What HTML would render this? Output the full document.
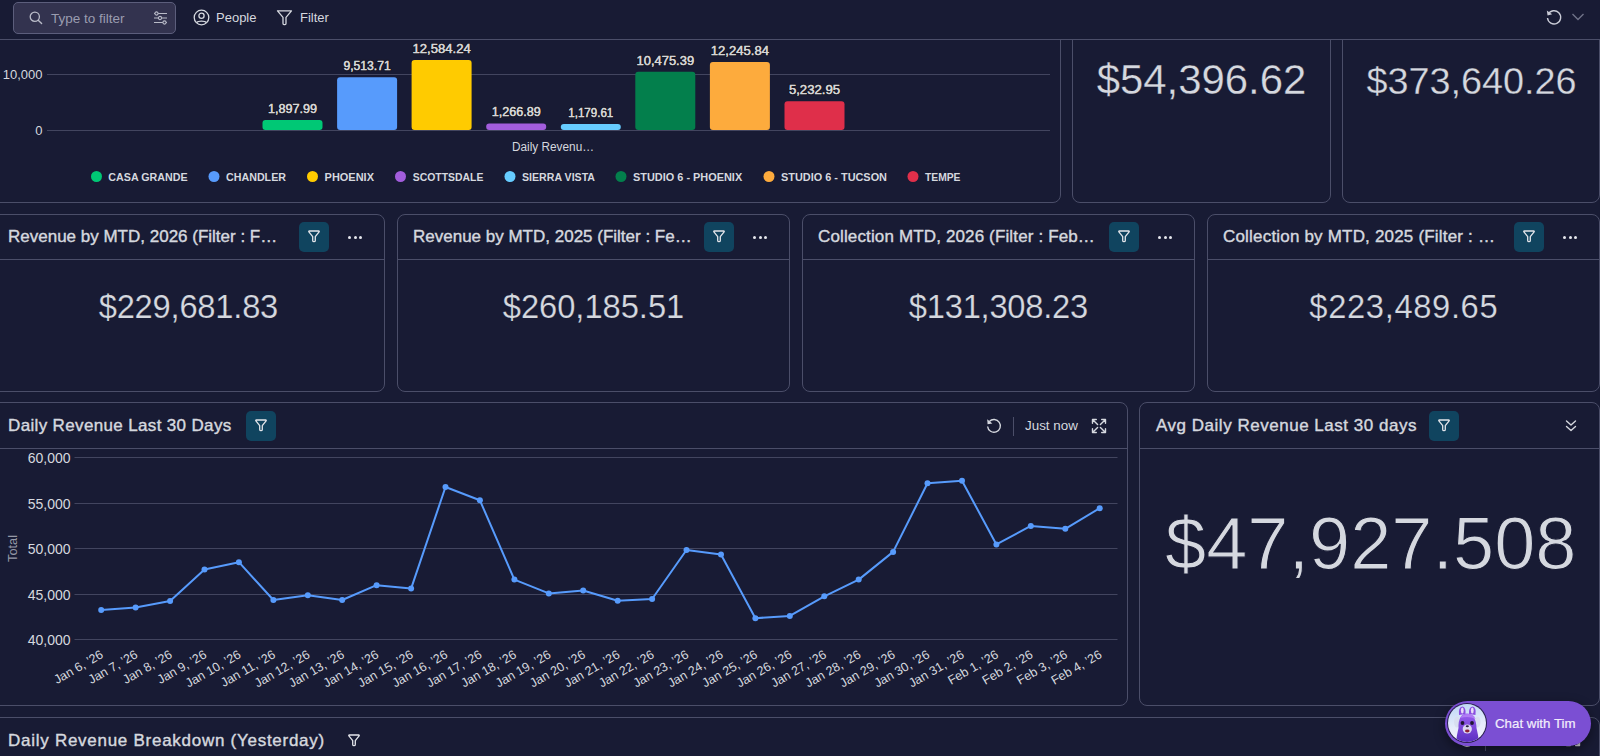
<!DOCTYPE html>
<html><head><meta charset="utf-8">
<style>
*{box-sizing:border-box;margin:0;padding:0}
html,body{width:1600px;height:756px;overflow:hidden;background:#181b34;font-family:"Liberation Sans",sans-serif;color:#d5d8df}
.abs{position:absolute}
.card{position:absolute;border:1px solid #4b4e69;border-radius:8px;background:#181b34}
.hdr{position:absolute;left:0;right:0;top:0;height:46px;border-bottom:1px solid #4b4e69}
.title{position:absolute;white-space:nowrap;font-size:17px;letter-spacing:0.15px;color:#d5d8df;line-height:20px;-webkit-text-stroke:0.4px #d5d8df}
.fbtn{position:absolute;width:29.5px;height:29.5px;border-radius:5px;background:#10445f}
.fbtn svg{position:absolute;left:7.6px;top:7px}
.dots{position:absolute;width:20px;height:6px}
.dots i{position:absolute;top:1.5px;width:3.2px;height:3.2px;border-radius:50%;background:#e6e8ee}
.val{position:absolute;white-space:nowrap;color:#d5d8df;text-align:center}
#toolbar{position:absolute;left:0;top:0;width:1600px;height:40px;background:#181b34;border-bottom:1px solid #4b4e69;z-index:10}
</style></head><body>

<!-- Row 1 -->
<div class="card" style="left:-8px;top:-40px;width:1069px;height:243px"></div>
<div class="card" style="left:1072px;top:-40px;width:259px;height:243px"></div>
<div class="card" style="left:1342px;top:-40px;width:258px;height:243px"></div>

<svg class="abs" style="left:0;top:0" width="1600" height="756" viewBox="0 0 1600 756">
<g stroke="#42455f" stroke-width="1"><path d="M47 74.5H1050"/></g>
<g font-family="Liberation Sans" font-size="13" fill="#d5d8df" text-anchor="end"><text x="42.5" y="79">10,000</text><text x="42.5" y="135">0</text></g>
<rect x="262.5" y="119.9" width="60" height="10.1" rx="3" fill="#00c875"/>
<text x="292.5" y="112.9" font-family="Liberation Sans" font-size="12.8" fill="#d6d6d6" stroke="#1a1a2a" stroke-width="2.8" paint-order="stroke" stroke-linejoin="round" text-anchor="middle" textLength="49.1" lengthAdjust="spacingAndGlyphs">1,897.99</text><text x="292.5" y="112.9" font-family="Liberation Sans" font-size="12.8" fill="#d6d6d6" stroke="#d6d6d6" stroke-width="0.3" text-anchor="middle" textLength="49.1" lengthAdjust="spacingAndGlyphs">1,897.99</text>
<rect x="337.1" y="77.2" width="60" height="52.8" rx="3" fill="#579bfc"/>
<text x="367.1" y="70.2" font-family="Liberation Sans" font-size="12.8" fill="#d6d6d6" stroke="#1a1a2a" stroke-width="2.8" paint-order="stroke" stroke-linejoin="round" text-anchor="middle" textLength="47.3" lengthAdjust="spacingAndGlyphs">9,513.71</text><text x="367.1" y="70.2" font-family="Liberation Sans" font-size="12.8" fill="#d6d6d6" stroke="#d6d6d6" stroke-width="0.3" text-anchor="middle" textLength="47.3" lengthAdjust="spacingAndGlyphs">9,513.71</text>
<rect x="411.6" y="60.0" width="60" height="70.0" rx="3" fill="#ffcb00"/>
<text x="441.6" y="53.0" font-family="Liberation Sans" font-size="12.8" fill="#d6d6d6" stroke="#1a1a2a" stroke-width="2.8" paint-order="stroke" stroke-linejoin="round" text-anchor="middle" textLength="58.2" lengthAdjust="spacingAndGlyphs">12,584.24</text><text x="441.6" y="53.0" font-family="Liberation Sans" font-size="12.8" fill="#d6d6d6" stroke="#d6d6d6" stroke-width="0.3" text-anchor="middle" textLength="58.2" lengthAdjust="spacingAndGlyphs">12,584.24</text>
<rect x="486.2" y="123.4" width="60" height="6.6" rx="3" fill="#a25ddc"/>
<text x="516.2" y="116.4" font-family="Liberation Sans" font-size="12.8" fill="#d6d6d6" stroke="#1a1a2a" stroke-width="2.8" paint-order="stroke" stroke-linejoin="round" text-anchor="middle" textLength="49.1" lengthAdjust="spacingAndGlyphs">1,266.89</text><text x="516.2" y="116.4" font-family="Liberation Sans" font-size="12.8" fill="#d6d6d6" stroke="#d6d6d6" stroke-width="0.3" text-anchor="middle" textLength="49.1" lengthAdjust="spacingAndGlyphs">1,266.89</text>
<rect x="560.8" y="123.9" width="60" height="6.1" rx="3" fill="#66ccff"/>
<text x="590.8" y="116.9" font-family="Liberation Sans" font-size="12.8" fill="#d6d6d6" stroke="#1a1a2a" stroke-width="2.8" paint-order="stroke" stroke-linejoin="round" text-anchor="middle" textLength="45" lengthAdjust="spacingAndGlyphs">1,179.61</text><text x="590.8" y="116.9" font-family="Liberation Sans" font-size="12.8" fill="#d6d6d6" stroke="#d6d6d6" stroke-width="0.3" text-anchor="middle" textLength="45" lengthAdjust="spacingAndGlyphs">1,179.61</text>
<rect x="635.3" y="71.8" width="60" height="58.2" rx="3" fill="#037f4c"/>
<text x="665.3" y="64.8" font-family="Liberation Sans" font-size="12.8" fill="#d6d6d6" stroke="#1a1a2a" stroke-width="2.8" paint-order="stroke" stroke-linejoin="round" text-anchor="middle" textLength="57.6" lengthAdjust="spacingAndGlyphs">10,475.39</text><text x="665.3" y="64.8" font-family="Liberation Sans" font-size="12.8" fill="#d6d6d6" stroke="#d6d6d6" stroke-width="0.3" text-anchor="middle" textLength="57.6" lengthAdjust="spacingAndGlyphs">10,475.39</text>
<rect x="709.9" y="61.9" width="60" height="68.1" rx="3" fill="#fdab3d"/>
<text x="739.9" y="54.9" font-family="Liberation Sans" font-size="12.8" fill="#d6d6d6" stroke="#1a1a2a" stroke-width="2.8" paint-order="stroke" stroke-linejoin="round" text-anchor="middle" textLength="58.2" lengthAdjust="spacingAndGlyphs">12,245.84</text><text x="739.9" y="54.9" font-family="Liberation Sans" font-size="12.8" fill="#d6d6d6" stroke="#d6d6d6" stroke-width="0.3" text-anchor="middle" textLength="58.2" lengthAdjust="spacingAndGlyphs">12,245.84</text>
<rect x="784.5" y="101.2" width="60" height="28.8" rx="3" fill="#df2f4a"/>
<text x="814.5" y="94.2" font-family="Liberation Sans" font-size="12.8" fill="#d6d6d6" stroke="#1a1a2a" stroke-width="2.8" paint-order="stroke" stroke-linejoin="round" text-anchor="middle" textLength="51.25" lengthAdjust="spacingAndGlyphs">5,232.95</text><text x="814.5" y="94.2" font-family="Liberation Sans" font-size="12.8" fill="#d6d6d6" stroke="#d6d6d6" stroke-width="0.3" text-anchor="middle" textLength="51.25" lengthAdjust="spacingAndGlyphs">5,232.95</text>
<g stroke="#42455f" stroke-width="1"><path d="M47 130.5H1050"/></g>
<text x="553" y="151" font-family="Liberation Sans" font-size="12.5" textLength="82" lengthAdjust="spacingAndGlyphs" fill="#d5d8df" text-anchor="middle">Daily Revenu…</text>
<circle cx="96.5" cy="176.5" r="5.5" fill="#00c875"/><text x="108.3" y="180.5" font-family="Liberation Sans" font-size="10.9" font-weight="bold" fill="#d5d8df" textLength="79.3" lengthAdjust="spacingAndGlyphs">CASA GRANDE</text>
<circle cx="214" cy="176.5" r="5.5" fill="#579bfc"/><text x="226" y="180.5" font-family="Liberation Sans" font-size="10.9" font-weight="bold" fill="#d5d8df" textLength="60" lengthAdjust="spacingAndGlyphs">CHANDLER</text>
<circle cx="312.5" cy="176.5" r="5.5" fill="#ffcb00"/><text x="324.6" y="180.5" font-family="Liberation Sans" font-size="10.9" font-weight="bold" fill="#d5d8df" textLength="49.4" lengthAdjust="spacingAndGlyphs">PHOENIX</text>
<circle cx="400.5" cy="176.5" r="5.5" fill="#a25ddc"/><text x="412.8" y="180.5" font-family="Liberation Sans" font-size="10.9" font-weight="bold" fill="#d5d8df" textLength="70.6" lengthAdjust="spacingAndGlyphs">SCOTTSDALE</text>
<circle cx="510" cy="176.5" r="5.5" fill="#66ccff"/><text x="522" y="180.5" font-family="Liberation Sans" font-size="10.9" font-weight="bold" fill="#d5d8df" textLength="73" lengthAdjust="spacingAndGlyphs">SIERRA VISTA</text>
<circle cx="621" cy="176.5" r="5.5" fill="#037f4c"/><text x="633" y="180.5" font-family="Liberation Sans" font-size="10.9" font-weight="bold" fill="#d5d8df" textLength="109.2" lengthAdjust="spacingAndGlyphs">STUDIO 6 - PHOENIX</text>
<circle cx="769" cy="176.5" r="5.5" fill="#fdab3d"/><text x="781" y="180.5" font-family="Liberation Sans" font-size="10.9" font-weight="bold" fill="#d5d8df" textLength="106" lengthAdjust="spacingAndGlyphs">STUDIO 6 - TUCSON</text>
<circle cx="913" cy="176.5" r="5.5" fill="#df2f4a"/><text x="925" y="180.5" font-family="Liberation Sans" font-size="10.9" font-weight="bold" fill="#d5d8df" textLength="35.5" lengthAdjust="spacingAndGlyphs">TEMPE</text>
</svg>
<div class="val" style="left:1072px;top:52px;width:259px;font-size:41.9px;line-height:56px;-webkit-text-stroke:0.3px #181b34">$54,396.62</div>
<div class="val" style="left:1342px;top:53px;width:259px;font-size:37.8px;line-height:56px;-webkit-text-stroke:0.3px #181b34">$373,640.26</div>
<!-- Row 2 -->
<div class="card" style="left:-8px;top:214px;width:393px;height:178px"><div class="hdr" style="height:45px"></div>
 <div class="title" style="left:15px;top:12px;letter-spacing:0px">Revenue by MTD, 2026 (Filter : F…</div>
 <div class="fbtn" style="left:306px;top:7px"><svg width="14" height="14" viewBox="0 0 14 14"><path d="M2.3 2 H11.7 Q12.6 2 12.1 2.8 L8.3 7.6 V11.4 Q8.3 12.6 7 12.6 Q5.7 12.6 5.7 11.4 V7.6 L1.9 2.8 Q1.4 2 2.3 2 Z" fill="none" stroke="#e3e5ea" stroke-width="1.3" stroke-linejoin="round"/></svg></div>
 <div class="dots" style="left:355px;top:19px"><i style="left:0"></i><i style="left:5.5px"></i><i style="left:11px"></i></div>
 <div class="val" style="left:0;top:76px;width:391px;font-size:32.7px;line-height:32px;-webkit-text-stroke:0.22px #181b34;letter-spacing:-0.22px;text-indent:-0.22px">$229,681.83</div>
</div>
<div class="card" style="left:397px;top:214px;width:393px;height:178px"><div class="hdr" style="height:45px"></div>
 <div class="title" style="left:15px;top:12px;letter-spacing:0px">Revenue by MTD, 2025 (Filter : Fe…</div>
 <div class="fbtn" style="left:306px;top:7px"><svg width="14" height="14" viewBox="0 0 14 14"><path d="M2.3 2 H11.7 Q12.6 2 12.1 2.8 L8.3 7.6 V11.4 Q8.3 12.6 7 12.6 Q5.7 12.6 5.7 11.4 V7.6 L1.9 2.8 Q1.4 2 2.3 2 Z" fill="none" stroke="#e3e5ea" stroke-width="1.3" stroke-linejoin="round"/></svg></div>
 <div class="dots" style="left:355px;top:19px"><i style="left:0"></i><i style="left:5.5px"></i><i style="left:11px"></i></div>
 <div class="val" style="left:0;top:76px;width:391px;font-size:32.7px;line-height:32px;-webkit-text-stroke:0.22px #181b34;letter-spacing:-0.03px;text-indent:-0.03px">$260,185.51</div>
</div>
<div class="card" style="left:802px;top:214px;width:393px;height:178px"><div class="hdr" style="height:45px"></div>
 <div class="title" style="left:15px;top:12px;letter-spacing:0.14px">Collection MTD, 2026 (Filter : Feb…</div>
 <div class="fbtn" style="left:306px;top:7px"><svg width="14" height="14" viewBox="0 0 14 14"><path d="M2.3 2 H11.7 Q12.6 2 12.1 2.8 L8.3 7.6 V11.4 Q8.3 12.6 7 12.6 Q5.7 12.6 5.7 11.4 V7.6 L1.9 2.8 Q1.4 2 2.3 2 Z" fill="none" stroke="#e3e5ea" stroke-width="1.3" stroke-linejoin="round"/></svg></div>
 <div class="dots" style="left:355px;top:19px"><i style="left:0"></i><i style="left:5.5px"></i><i style="left:11px"></i></div>
 <div class="val" style="left:0;top:76px;width:391px;font-size:32.7px;line-height:32px;-webkit-text-stroke:0.22px #181b34;letter-spacing:-0.25px;text-indent:-0.25px">$131,308.23</div>
</div>
<div class="card" style="left:1207px;top:214px;width:393px;height:178px"><div class="hdr" style="height:45px"></div>
 <div class="title" style="left:15px;top:12px;letter-spacing:0.19px">Collection by MTD, 2025 (Filter : …</div>
 <div class="fbtn" style="left:306px;top:7px"><svg width="14" height="14" viewBox="0 0 14 14"><path d="M2.3 2 H11.7 Q12.6 2 12.1 2.8 L8.3 7.6 V11.4 Q8.3 12.6 7 12.6 Q5.7 12.6 5.7 11.4 V7.6 L1.9 2.8 Q1.4 2 2.3 2 Z" fill="none" stroke="#e3e5ea" stroke-width="1.3" stroke-linejoin="round"/></svg></div>
 <div class="dots" style="left:355px;top:19px"><i style="left:0"></i><i style="left:5.5px"></i><i style="left:11px"></i></div>
 <div class="val" style="left:0;top:76px;width:391px;font-size:32.7px;line-height:32px;-webkit-text-stroke:0.22px #181b34;letter-spacing:0.65px;text-indent:0.65px">$223,489.65</div>
</div>

<!-- Row 3 -->
<div class="card" style="left:-8px;top:402px;width:1136px;height:304px"><div class="hdr"></div>
 <div class="title" style="left:15px;top:13px;letter-spacing:0.35px">Daily Revenue Last 30 Days</div>
 <div class="fbtn" style="left:253px;top:8px"><svg width="14" height="14" viewBox="0 0 14 14"><path d="M2.3 2 H11.7 Q12.6 2 12.1 2.8 L8.3 7.6 V11.4 Q8.3 12.6 7 12.6 Q5.7 12.6 5.7 11.4 V7.6 L1.9 2.8 Q1.4 2 2.3 2 Z" fill="none" stroke="#e3e5ea" stroke-width="1.3" stroke-linejoin="round"/></svg></div>
 <svg class="abs" style="left:992px;top:14px" width="18" height="18" viewBox="0 0 18 18"><path d="M4.2 4.6 A6.4 6.4 0 1 1 2.6 9.5" fill="none" stroke="#d5d8df" stroke-width="1.4"/><path d="M2.2 2.2 L2.6 7.2 L7.4 6.4 Z" fill="#d5d8df"/></svg>
 <div class="abs" style="left:1020px;top:14px;width:1px;height:19px;background:#4b4e69"></div>
 <div class="abs" style="left:1032px;top:15px;font-size:13.4px;line-height:16px;color:#d5d8df;white-space:nowrap">Just now</div>
 <svg class="abs" style="left:1098px;top:14.5px" width="16" height="16" viewBox="0 0 16 16"><g fill="none" stroke="#d5d8df" stroke-width="1.4" stroke-linecap="round" stroke-linejoin="round"><path d="M1.5 1.5 L6.6 6.6M1.5 5.3V1.5H5.3"/><path d="M14.5 1.5 L9.4 6.6M14.5 5.3V1.5H10.7"/><path d="M1.5 14.5 L6.6 9.4M1.5 10.7V14.5H5.3"/><path d="M14.5 14.5 L9.4 9.4M14.5 10.7V14.5H10.7"/></g></svg>
</div>
<div class="card" style="left:1139px;top:402px;width:461px;height:304px"><div class="hdr"></div>
 <div class="title" style="left:16px;top:13px;letter-spacing:0.52px">Avg Daily Revenue Last 30 days</div>
 <div class="fbtn" style="left:289px;top:8px"><svg width="14" height="14" viewBox="0 0 14 14"><path d="M2.3 2 H11.7 Q12.6 2 12.1 2.8 L8.3 7.6 V11.4 Q8.3 12.6 7 12.6 Q5.7 12.6 5.7 11.4 V7.6 L1.9 2.8 Q1.4 2 2.3 2 Z" fill="none" stroke="#e3e5ea" stroke-width="1.3" stroke-linejoin="round"/></svg></div>
 <svg class="abs" style="left:424px;top:15px" width="14" height="16" viewBox="0 0 14 16"><g fill="none" stroke="#d5d8df" stroke-width="1.4" stroke-linecap="round" stroke-linejoin="round"><path d="M2.5 3 L7 7 L11.5 3"/><path d="M2.5 8.5 L7 12.5 L11.5 8.5"/></g></svg>
 <div class="val" style="left:25px;top:101px;font-size:74px;line-height:80px;-webkit-text-stroke:1.1px #181b34">$47,927.508</div>
</div>
<svg class="abs" style="left:0;top:0" width="1600" height="756" viewBox="0 0 1600 756">
<g stroke="#42455f" stroke-width="1"><path d="M74.5 457.5H1117.5"/><path d="M74.5 503.5H1117.5"/><path d="M74.5 548.5H1117.5"/><path d="M74.5 594.5H1117.5"/><path d="M74.5 639.5H1117.5"/></g>
<g font-family="Liberation Sans" font-size="14" fill="#d5d8df" text-anchor="end"><text x="70.5" y="462.8">60,000</text><text x="70.5" y="508.8">55,000</text><text x="70.5" y="553.8">50,000</text><text x="70.5" y="599.8">45,000</text><text x="70.5" y="644.8">40,000</text></g>
<text transform="translate(16.8 548.5) rotate(-90)" font-family="Liberation Sans" font-size="12.8" fill="#9699a6" text-anchor="middle">Total</text>
<path d="M101.2 610.0 L135.6 607.4 L170.1 601.0 L204.5 569.6 L238.9 562.2 L273.4 600.0 L307.8 595.2 L342.2 600.0 L376.6 585.2 L411.1 588.6 L445.5 487.0 L479.9 500.3 L514.4 579.6 L548.8 593.4 L583.2 590.5 L617.7 600.8 L652.1 599.0 L686.5 550.0 L721.0 554.5 L755.4 618.2 L789.8 615.9 L824.3 596.3 L858.7 579.6 L893.1 551.9 L927.5 483.3 L962.0 480.7 L996.4 544.4 L1030.8 525.9 L1065.3 528.8 L1099.7 508.2" fill="none" stroke="#579bfc" stroke-width="2" stroke-linejoin="round"/>
<g fill="#579bfc"><circle cx="101.2" cy="610.0" r="3"/><circle cx="135.6" cy="607.4" r="3"/><circle cx="170.1" cy="601.0" r="3"/><circle cx="204.5" cy="569.6" r="3"/><circle cx="238.9" cy="562.2" r="3"/><circle cx="273.4" cy="600.0" r="3"/><circle cx="307.8" cy="595.2" r="3"/><circle cx="342.2" cy="600.0" r="3"/><circle cx="376.6" cy="585.2" r="3"/><circle cx="411.1" cy="588.6" r="3"/><circle cx="445.5" cy="487.0" r="3"/><circle cx="479.9" cy="500.3" r="3"/><circle cx="514.4" cy="579.6" r="3"/><circle cx="548.8" cy="593.4" r="3"/><circle cx="583.2" cy="590.5" r="3"/><circle cx="617.7" cy="600.8" r="3"/><circle cx="652.1" cy="599.0" r="3"/><circle cx="686.5" cy="550.0" r="3"/><circle cx="721.0" cy="554.5" r="3"/><circle cx="755.4" cy="618.2" r="3"/><circle cx="789.8" cy="615.9" r="3"/><circle cx="824.3" cy="596.3" r="3"/><circle cx="858.7" cy="579.6" r="3"/><circle cx="893.1" cy="551.9" r="3"/><circle cx="927.5" cy="483.3" r="3"/><circle cx="962.0" cy="480.7" r="3"/><circle cx="996.4" cy="544.4" r="3"/><circle cx="1030.8" cy="525.9" r="3"/><circle cx="1065.3" cy="528.8" r="3"/><circle cx="1099.7" cy="508.2" r="3"/></g>
<g font-family="Liberation Sans" font-size="12.6" fill="#d5d8df" text-anchor="end"><text transform="translate(104.2 657) rotate(-30)">Jan 6, ’26</text><text transform="translate(138.6 657) rotate(-30)">Jan 7, ’26</text><text transform="translate(173.1 657) rotate(-30)">Jan 8, ’26</text><text transform="translate(207.5 657) rotate(-30)">Jan 9, ’26</text><text transform="translate(241.9 657) rotate(-30)">Jan 10, ’26</text><text transform="translate(276.4 657) rotate(-30)">Jan 11, ’26</text><text transform="translate(310.8 657) rotate(-30)">Jan 12, ’26</text><text transform="translate(345.2 657) rotate(-30)">Jan 13, ’26</text><text transform="translate(379.6 657) rotate(-30)">Jan 14, ’26</text><text transform="translate(414.1 657) rotate(-30)">Jan 15, ’26</text><text transform="translate(448.5 657) rotate(-30)">Jan 16, ’26</text><text transform="translate(482.9 657) rotate(-30)">Jan 17, ’26</text><text transform="translate(517.4 657) rotate(-30)">Jan 18, ’26</text><text transform="translate(551.8 657) rotate(-30)">Jan 19, ’26</text><text transform="translate(586.2 657) rotate(-30)">Jan 20, ’26</text><text transform="translate(620.7 657) rotate(-30)">Jan 21, ’26</text><text transform="translate(655.1 657) rotate(-30)">Jan 22, ’26</text><text transform="translate(689.5 657) rotate(-30)">Jan 23, ’26</text><text transform="translate(724.0 657) rotate(-30)">Jan 24, ’26</text><text transform="translate(758.4 657) rotate(-30)">Jan 25, ’26</text><text transform="translate(792.8 657) rotate(-30)">Jan 26, ’26</text><text transform="translate(827.3 657) rotate(-30)">Jan 27, ’26</text><text transform="translate(861.7 657) rotate(-30)">Jan 28, ’26</text><text transform="translate(896.1 657) rotate(-30)">Jan 29, ’26</text><text transform="translate(930.5 657) rotate(-30)">Jan 30, ’26</text><text transform="translate(965.0 657) rotate(-30)">Jan 31, ’26</text><text transform="translate(999.4 657) rotate(-30)">Feb 1, ’26</text><text transform="translate(1033.8 657) rotate(-30)">Feb 2, ’26</text><text transform="translate(1068.3 657) rotate(-30)">Feb 3, ’26</text><text transform="translate(1102.7 657) rotate(-30)">Feb 4, ’26</text></g>
</svg>

<!-- Row 4 -->
<div class="card" style="left:-8px;top:717px;width:1608px;height:200px">
 <div class="title" style="left:15px;top:13px;letter-spacing:0.73px">Daily Revenue Breakdown (Yesterday)</div>
 <svg class="abs" style="left:354px;top:15px" width="14" height="14" viewBox="0 0 14 14"><path d="M2.3 2 H11.7 Q12.6 2 12.1 2.8 L8.3 7.6 V11.4 Q8.3 12.6 7 12.6 Q5.7 12.6 5.7 11.4 V7.6 L1.9 2.8 Q1.4 2 2.3 2 Z" fill="none" stroke="#e3e5ea" stroke-width="1.3" stroke-linejoin="round"/></svg>
 <svg class="abs" style="left:1465px;top:13px" width="18" height="18" viewBox="0 0 18 18"><path d="M4.2 4.6 A6.4 6.4 0 1 1 2.6 9.5" fill="none" stroke="#d5d8df" stroke-width="1.4"/></svg>
 <div class="abs" style="left:1492px;top:12px;width:1px;height:21px;background:#4b4e69"></div>
 <svg class="abs" style="left:1572px;top:13px" width="16" height="16" viewBox="0 0 16 16"><g fill="none" stroke="#d5d8df" stroke-width="1.4" stroke-linecap="round" stroke-linejoin="round"><path d="M1.5 1.5 L6.6 6.6M1.5 5.3V1.5H5.3"/><path d="M14.5 1.5 L9.4 6.6M14.5 5.3V1.5H10.7"/><path d="M1.5 14.5 L6.6 9.4M1.5 10.7V14.5H5.3"/><path d="M14.5 14.5 L9.4 9.4M14.5 10.7V14.5H10.7"/></g></svg>
</div>
<div class="abs" style="left:1445px;top:701px;width:146px;height:44.5px;border-radius:23px;background:#7b4fd3;z-index:5;box-shadow:0 4px 12px rgba(0,0,0,0.45)">
 <div class="abs" style="left:2px;top:2px;width:40px;height:40px;border-radius:50%;background:#2a2050;overflow:hidden">
  <div class="abs" style="left:1px;top:1px;width:38px;height:38px;border-radius:50%;background:linear-gradient(170deg,#bcd6f5 0%,#e6ecfb 55%,#f5f2fc 100%);overflow:hidden">
   <svg class="abs" style="left:0;top:0" width="38" height="38" viewBox="0 0 38 38">
    <defs><linearGradient id="lg" x1="0" y1="0" x2="0" y2="1"><stop offset="0" stop-color="#9a5ff0"/><stop offset="1" stop-color="#5b2fc0"/></linearGradient></defs>
    <path d="M11 11 Q10 3 14.5 2.5 Q18 3 17.5 10Z" fill="#8a4fe0"/><path d="M21 10 Q20.5 3 24.5 2.5 Q28.5 3 27.5 11Z" fill="#8a4fe0"/>
    <ellipse cx="14.3" cy="6.5" rx="1.4" ry="3" fill="#e9dcf7"/><ellipse cx="24.3" cy="6.5" rx="1.4" ry="3" fill="#e9dcf7"/>
    <ellipse cx="9" cy="18" rx="3" ry="5.5" fill="#d8def0"/><ellipse cx="29.5" cy="18" rx="3" ry="5.5" fill="#d8def0"/>
    <path d="M8 38 Q9 30 10.5 24 Q10 10 19 9.5 Q28 10 28.5 24 Q30 30 31 38Z" fill="url(#lg)"/>
    <path d="M12 14 Q16 8.5 24 10.5 Q27 12 27.5 15 Q21 11.5 12 14Z" fill="#b07cf5"/>
    <ellipse cx="19.3" cy="25" rx="4.6" ry="4.6" fill="#ddd8f2"/>
    <circle cx="14.5" cy="19" r="1.9" fill="#1e1530"/><circle cx="24" cy="19" r="1.9" fill="#1e1530"/>
    <ellipse cx="19.3" cy="22.3" rx="1.6" ry="1" fill="#2a2040"/>
    <ellipse cx="19.3" cy="27" rx="2.3" ry="1.4" fill="#8e1f35"/>
   </svg>
  </div>
 </div>
 <div class="abs" style="left:50px;top:15px;font-size:13.3px;line-height:16px;color:#f2eefc;white-space:nowrap;-webkit-text-stroke:0.2px #f2eefc">Chat with Tim</div>
</div>

<div id="toolbar">
 <div class="abs" style="left:13px;top:2px;width:163px;height:32px;border:1px solid #5c5e7c;border-radius:5px;background:#33334f"></div>
 <svg class="abs" style="left:29px;top:11px" width="14" height="14" viewBox="0 0 14 14"><circle cx="5.8" cy="5.8" r="4.6" fill="none" stroke="#b9bbc8" stroke-width="1.3"/><path d="M9.2 9.2 L12.6 12.6" stroke="#b9bbc8" stroke-width="1.4" stroke-linecap="round"/></svg>
 <div class="abs" style="left:51px;top:11px;font-size:13.5px;line-height:16px;color:#9a9cb0;white-space:nowrap">Type to filter</div>
 <svg class="abs" style="left:153px;top:11px" width="15" height="14" viewBox="0 0 15 14"><g stroke="#b9bbc8" stroke-width="1.1" fill="none"><path d="M1 2.5H14M1 7H14M1 11.5H14"/><circle cx="3.5" cy="2.5" r="1.6" fill="#33334f"/><circle cx="7" cy="7" r="1.6" fill="#33334f"/><circle cx="11.5" cy="11.5" r="1.6" fill="#33334f"/></g></svg>
 <svg class="abs" style="left:193px;top:9px" width="17" height="17" viewBox="0 0 17 17"><g fill="none" stroke="#d5d8df" stroke-width="1.3"><circle cx="8.5" cy="8.5" r="7.3"/><circle cx="8.5" cy="6.8" r="2.6"/><path d="M3.6 13.7 C5 11.6 12 11.6 13.4 13.7"/></g></svg>
 <div class="abs" style="left:216px;top:10px;font-size:13px;line-height:16px;color:#d5d8df;white-space:nowrap">People</div>
 <svg class="abs" style="left:276px;top:9px" width="17" height="17" viewBox="0 0 17 17"><path d="M1.5 1.8 H15.5 L10 8.4 V14.6 Q10 15.6 9 15.6 H8 Q7 15.6 7 14.6 V8.4 Z" fill="none" stroke="#d5d8df" stroke-width="1.3" stroke-linejoin="round"/></svg>
 <div class="abs" style="left:300px;top:10px;font-size:13px;line-height:16px;color:#d5d8df;white-space:nowrap">Filter</div>
 <svg class="abs" style="left:1545px;top:8px" width="18" height="18" viewBox="0 0 18 18"><path d="M3.2 6.3 A6.6 6.6 0 1 1 2.5 10" fill="none" stroke="#c9cbd6" stroke-width="1.4"/><path d="M1.8 2.6 L2.6 7.4 L7.2 6.2 Z" fill="#c9cbd6"/></svg>
 <svg class="abs" style="left:1571px;top:12px" width="14" height="10" viewBox="0 0 14 10"><path d="M1.5 2 L7 7.5 L12.5 2" fill="none" stroke="#6f7288" stroke-width="1.4"/></svg>
</div>

</body></html>
